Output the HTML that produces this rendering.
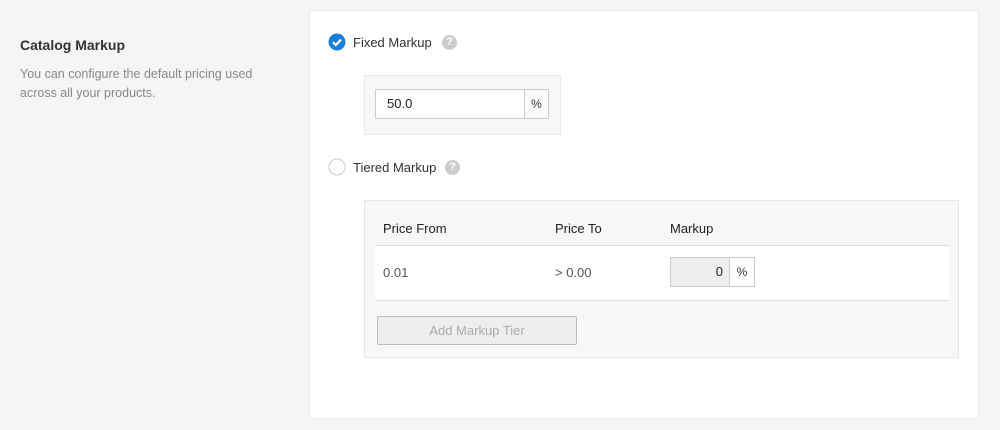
<!DOCTYPE html>
<html><head><style>
*{box-sizing:border-box;margin:0;padding:0}
body{width:1000px;height:430px;background:#f5f5f5;font-family:"Liberation Sans",sans-serif;position:relative;overflow:hidden;color:#333}
.a{position:absolute}
.card{left:309px;top:10px;width:670px;height:409px;background:#fff;border:1px solid #eaeaea}
.lbl{font-size:13px;color:#333;line-height:16px}
.help{width:15px;height:15px;border-radius:50%;background:#ccc;color:#fff;font-size:11px;font-weight:bold;text-align:center;line-height:15px}
.inp{border:1px solid #ccc;background:#fff;font-size:13px;line-height:27px}
.pct{line-height:29px}
</style></head><body>
<div class="a" style="left:20px;top:37px;font-size:14px;font-weight:bold;color:#333">Catalog Markup</div>
<div class="a" style="left:20px;top:65px;font-size:12.5px;color:#888;line-height:19px;width:270px">You can configure the default pricing used across all your products.</div>
<div class="a card"></div>

<svg class="a" style="left:328px;top:33px" width="18" height="18"><circle cx="9" cy="9" r="8.5" fill="#1a7fd6"/><path d="M5 9.2l2.8 2.8 5.2-5.4" stroke="#fff" stroke-width="2.2" fill="none"/></svg>
<div class="a lbl" style="left:353px;top:35px">Fixed Markup</div>
<div class="a help" style="left:442px;top:35px">?</div>

<div class="a" style="left:364px;top:75px;width:197px;height:60px;background:#f7f7f7;border:1px solid #e8e8e8"></div>
<div class="a inp" style="left:375px;top:89px;width:150px;height:30px;padding-left:11px;color:#222">50.0</div>
<div class="a inp pct" style="left:524px;top:89px;width:25px;height:30px;text-align:center;background:#fafafa;font-size:12px">%</div>

<svg class="a" style="left:328px;top:158px" width="18" height="18"><circle cx="9" cy="9" r="8" fill="#fff" stroke="#ccc"/></svg>
<div class="a lbl" style="left:353px;top:160px">Tiered Markup</div>
<div class="a help" style="left:445px;top:160px">?</div>

<div class="a" style="left:364px;top:200px;width:595px;height:158px;background:#f7f7f7;border:1px solid #e6e6e6"></div>
<div class="a lbl" style="left:383px;top:221px;color:#222">Price From</div>
<div class="a lbl" style="left:555px;top:221px;color:#222">Price To</div>
<div class="a lbl" style="left:670px;top:221px;color:#222">Markup</div>
<div class="a" style="left:375px;top:245px;width:574px;height:56px;background:#fff;border-top:1px solid #ddd;border-bottom:1px solid #ddd"></div>
<div class="a lbl" style="left:383px;top:265px;color:#555">0.01</div>
<div class="a lbl" style="left:555px;top:265px;color:#555">&gt; 0.00</div>
<div class="a inp" style="left:670px;top:257px;width:60px;height:30px;background:#eee;text-align:right;padding-right:6px;color:#222">0</div>
<div class="a inp pct" style="left:729px;top:257px;width:26px;height:30px;text-align:center;font-size:12px">%</div>
<div class="a" style="left:377px;top:316px;width:200px;height:29px;background:#eee;border:1px solid #bbb;border-radius:2px;color:#aaa;font-size:13px;text-align:center;line-height:27px">Add Markup Tier</div>
</body></html>
